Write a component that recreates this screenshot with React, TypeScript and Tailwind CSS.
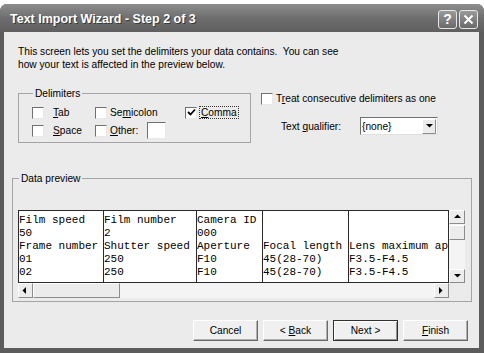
import React from "react"

const ui = "font-['Liberation_Sans',Arial,sans-serif] text-[10.2px] leading-[13px] text-black"

const Check: React.FC<{ checked?: boolean }> = ({ checked }) => (
  <div className="w-[12px] h-[12px] shrink-0 bg-white border border-t-[#707070] border-l-[#707070] border-b-[#e8e8e8] border-r-[#e8e8e8] flex items-center justify-center">
    {checked && (
      <svg width="9" height="9" viewBox="0 0 9 9">
        <path d="M1 4 L3.5 6.5 L8 1.5" stroke="#000" strokeWidth="1.8" fill="none" />
      </svg>
    )}
  </div>
)

const Btn: React.FC<{ children: React.ReactNode; def?: boolean }> = ({ children, def }) => (
  <div
    className={
      "w-[65px] h-[21px] flex items-center justify-center bg-[#f0f0f0] whitespace-pre " +
      (def
        ? "border border-[#303030] shadow-[inset_1px_1px_0_#fff,inset_-1px_-1px_0_#909090]"
        : "border border-t-[#ffffff] border-l-[#ffffff] border-b-[#6a6a6a] border-r-[#6a6a6a] shadow-[inset_-1px_-1px_0_#b0b0b0]")
    }
  >
    {children}
  </div>
)

const ScrollBtn: React.FC<{ dir: "up" | "down" | "left" | "right"; className?: string }> = ({ dir, className }) => {
  const pts = {
    up: "2,6 5.5,2.5 9,6",
    down: "2,3 5.5,6.5 9,3",
    left: "6,2 2.5,5.5 6,9",
    right: "3,2 6.5,5.5 3,9",
  }[dir]
  return (
    <div className={"flex items-center justify-center bg-[#ececec] border border-t-white border-l-white border-b-[#8c8c8c] border-r-[#8c8c8c] " + (className || "")}>
      <svg width="11" height="11" viewBox="0 0 11 11">
        <polygon points={pts} fill="#000" />
      </svg>
    </div>
  )
}

const columns: { w: string; rows: string[] }[] = [
  { w: "w-[85px]", rows: ["Film speed", "50", "Frame number", "01", "02"] },
  { w: "w-[93px]", rows: ["Film number", "2", "Shutter speed", "250", "250"] },
  { w: "w-[66px]", rows: ["Camera ID", "000", "Aperture", "F10", "F10"] },
  { w: "w-[86px]", rows: ["", "", "Focal length", "45(28-70)", "45(28-70)"] },
  { w: "flex-1", rows: ["", "", "Lens maximum aperture", "F3.5-F4.5", "F3.5-F4.5"] },
]

const App: React.FC = () => {
  return (
    <div className={"w-[484px] h-[353px] bg-white pt-[4px] " + ui}>
      <div className="h-[349px] flex flex-col rounded-t-[7px] bg-[#5c5c5c] overflow-hidden">
        {/* title bar */}
        <div className="h-[28px] shrink-0 flex items-center pt-[3px] pl-[10px] pr-[6px] bg-gradient-to-b from-[#8e8e8e] via-[#6e6e6e] to-[#5f5f5f]">
          <div className="flex-1 font-bold text-[12.5px] text-white [text-shadow:1px_1px_0_#3a3a3a]">
            Text Import Wizard - Step 2 of 3
          </div>
          <div className="flex gap-[2px]">
            <div className="w-[19px] h-[19px] rounded-[3px] border border-[#e6e6e6] bg-gradient-to-b from-[#9a9a9a] to-[#6a6a6a] flex items-center justify-center text-white font-bold text-[14px]">
              ?
            </div>
            <div className="w-[19px] h-[19px] rounded-[3px] border border-[#e6e6e6] bg-gradient-to-b from-[#9a9a9a] to-[#6a6a6a] flex items-center justify-center">
              <svg width="11" height="11" viewBox="0 0 11 11">
                <path d="M1.5 1.5 L9.5 9.5 M9.5 1.5 L1.5 9.5" stroke="#fff" strokeWidth="2" />
              </svg>
            </div>
          </div>
        </div>

        {/* body */}
        <div className="flex-1 mx-[4px] mr-[5px] mb-[5px] bg-[#ebebeb] flex flex-col">
          <div className="mt-[13px] ml-[14px]">
            <div>This screen lets you set the delimiters your data contains.&nbsp; You can see</div>
            <div>how your text is affected in the preview below.</div>
          </div>

          <div className="flex mt-[16px] ml-[14px]">
            <fieldset className="w-[233px] border border-[#a4a4a4] pl-[13px] pb-[3px]">
              <legend className="px-[2px] ml-[1px]">Delimiters</legend>
              <div className="grid grid-cols-[63px_90px_auto] mt-[6px]">
                <div className="flex items-center h-[13px] gap-[9px]">
                  <Check />
                  <span><u>T</u>ab</span>
                </div>
                <div className="flex items-center h-[13px] gap-[3px]">
                  <Check />
                  <span>Se<u>m</u>icolon</span>
                </div>
                <div className="flex items-center h-[13px] gap-[2px]">
                  <Check checked />
                  <span className="border border-dotted border-[#333] px-[1px] leading-[11px]"><u>C</u>omma</span>
                </div>
                <div className="flex items-center h-[17px] mt-[3px] gap-[9px]">
                  <Check />
                  <span><u>S</u>pace</span>
                </div>
                <div className="flex items-center h-[17px] mt-[3px] gap-[3px]">
                  <Check />
                  <span><u>O</u>ther:</span>
                  <div className="ml-[6px] w-[19px] h-[17px] bg-white border border-t-[#707070] border-l-[#707070] border-b-[#e8e8e8] border-r-[#e8e8e8]" />
                </div>
              </div>
            </fieldset>

            <div className="ml-[10px] mt-[5px]">
              <div className="flex items-center h-[13px] gap-[3px]">
                <Check />
                <span>T<u>r</u>eat consecutive delimiters as one</span>
              </div>
              <div className="flex items-center mt-[12px] ml-[20px]">
                <span className="w-[79px]">Text <u>q</u>ualifier:</span>
                <div className="w-[78px] h-[18px] bg-white border border-t-[#707070] border-l-[#707070] border-b-[#e0e0e0] border-r-[#e0e0e0] flex items-center">
                  <span className="flex-1 pl-[1px]">{"{none}"}</span>
                  <ScrollBtn dir="down" className="w-[14px] h-[15px] mr-[1px]" />
                </div>
              </div>
            </div>
          </div>

          <fieldset className="mt-[29px] ml-[8px] w-[460px] border border-[#a4a4a4] pl-[5px] pb-[3px]">
            <legend className="px-[2px] ml-[1px]">Data preview</legend>
            <div className="mt-[25px] w-[447px] flex flex-col">
              <div className="flex h-[73px]">
                <div className="w-[431px] flex border border-[#2a2a2a] bg-white pt-[3px] font-['Liberation_Mono','Courier_New',monospace] text-[11px] leading-[13px] overflow-hidden">
                  {columns.map((c, i) => (
                    <div key={i} className={c.w + " shrink-0 whitespace-nowrap overflow-hidden -mt-[3px] pt-[3px] " + (i < columns.length - 1 ? "border-r border-[#2a2a2a]" : "")}>
                      {c.rows.map((r, j) => (
                        <div key={j} className="h-[13px]">{r}</div>
                      ))}
                    </div>
                  ))}
                </div>
                <div className="w-[16px] flex flex-col bg-[#f4f4f4]">
                  <ScrollBtn dir="up" className="h-[14px]" />
                  <div className="h-[15px] mt-[1px] bg-[#ececec] border border-t-white border-l-white border-b-[#8c8c8c] border-r-[#8c8c8c]" />
                  <div className="flex-1" />
                  <ScrollBtn dir="down" className="h-[14px]" />
                </div>
              </div>
              <div className="flex h-[15px]">
                <div className="w-[431px] flex bg-[#f4f4f4]">
                  <ScrollBtn dir="left" className="w-[15px]" />
                  <div className="w-[87px] bg-[#ececec] border border-t-white border-l-white border-b-[#8c8c8c] border-r-[#8c8c8c]" />
                  <div className="flex-1" />
                  <ScrollBtn dir="right" className="w-[15px]" />
                </div>
              </div>
            </div>
          </fieldset>

          <div className="flex justify-end gap-[5px] mt-[18px] mr-[11px]">
            <Btn>Cancel</Btn>
            <Btn><span>{"< "}</span><u>B</u><span>ack</span></Btn>
            <Btn def>Next &gt;</Btn>
            <Btn><u>F</u>inish</Btn>
          </div>
        </div>
      </div>
    </div>
  )
}

export default App
